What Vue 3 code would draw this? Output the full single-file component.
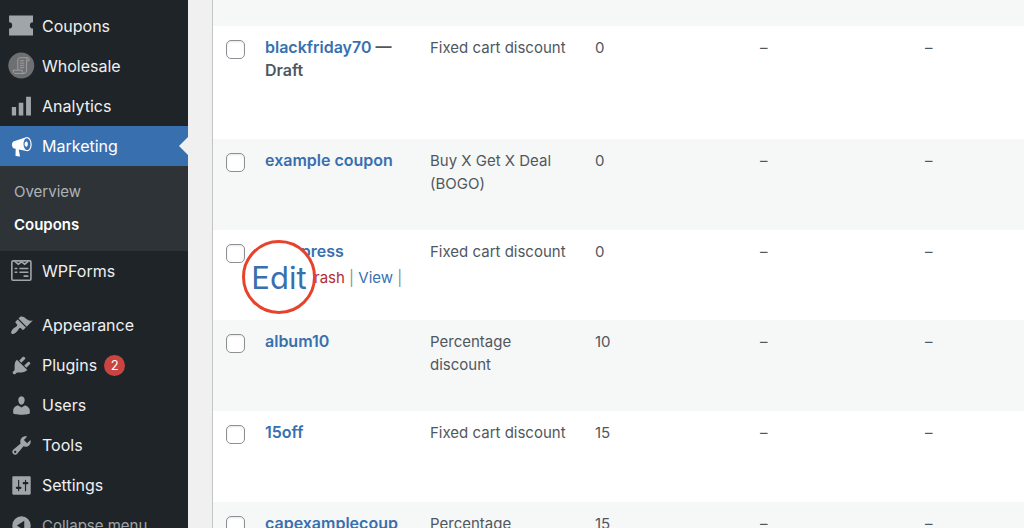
<script setup>
import { ref } from 'vue'

const topItems = [
  { label: 'Coupons', icon: 'ticket' },
  { label: 'Wholesale', icon: 'scroll' },
  { label: 'Analytics', icon: 'bars' },
  { label: 'Marketing', icon: 'megaphone', current: true },
]
const lowerItems = [
  { label: 'Appearance', icon: 'brush' },
  { label: 'Plugins', icon: 'plug', count: 2 },
  { label: 'Users', icon: 'user' },
  { label: 'Tools', icon: 'wrench' },
  { label: 'Settings', icon: 'sliders' },
]

const groups = [
  { items: topItems },
  { submenu: ['Overview', 'Coupons'] },
  { items: [{ label: 'WPForms', icon: 'form' }] },
  { separator: true },
  { items: lowerItems },
]

const icons = {
  ticket: 'M-.8 .4H20V6.4A2.7 2.7 0 0 0 20 11.8V17.8H-.8V11.8A2.7 2.7 0 0 0-.8 6.4Z',
  bars: 'M1.6 10.4H5.3V17.8H1.6ZM7.6 6.8H11.6V17.8H7.6ZM14 1.6H18.2V17.8H14Z',
  megaphone:
    'M18.15 5.94c.46 1.62.38 3.22-.02 4.48-.42 1.28-1.26 2.18-2.3 2.48-.16.06-.26.06-.4.06-.06.02-.12.02-.18.02-.06.02-.14.02-.22.02h-6.8l2.22 5.5c.02.14-.06.26-.14.34-.08.1-.24.16-.34.16H6.95c-.1 0-.26-.06-.34-.16-.08-.08-.16-.2-.14-.34l-1-5.5H4.25l-.02-.02c-.5.06-1.08-.18-1.54-.62s-.88-1.08-1.06-1.88c-.24-.8-.2-1.56-.02-2.2.18-.62.58-1.08 1.06-1.3l.02-.02 9-5.4c.1-.06.18-.1.24-.16.06-.04.14-.08.24-.12.16-.08.28-.12.5-.18 1.04-.3 2.24.1 3.22.98s1.84 2.24 2.26 3.86zm-2.58 5.98h-.02c.4-.1.74-.34 1.04-.7.58-.7.86-1.76.86-3.04 0-.64-.1-1.3-.28-1.98-.34-1.36-1.02-2.5-1.78-3.24s-1.68-1.1-2.46-.88c-.82.22-1.4.96-1.7 2-.32 1.04-.28 2.36.06 3.72.38 1.36 1 2.5 1.8 3.24.78.74 1.62 1.1 2.48.88zm-2.54-7.08c.22-.04.42-.02.62.04.38.16.76.48 1.02 1s.42 1.2.42 1.78c0 .3-.04.56-.12.8-.18.48-.44.84-.86.94-.34.1-.8-.06-1.14-.4s-.64-.86-.78-1.5c-.18-.62-.12-1.24.02-1.72s.48-.84.82-.94z',
  brush:
    'M14.48 11.06L7.41 3.99l1.5-1.5c.5-.56 2.3-.47 3.51.32 1.21.8 1.43 1.28 2.91 2.1 1.18.64 2.45 1.26 4.45.85zm-.71.71L6.7 4.7 4.93 6.47c-.39.39-.39 1.02 0 1.41l1.06 1.06c.39.39.39 1.03 0 1.42-.6.6-1.43 1.11-2.21 1.69-.35.26-.7.53-1.01.84C1.43 14.23.4 16.08 1.4 17.07c.99 1 2.84-.03 4.18-1.36.31-.31.58-.66.85-1.02.57-.78 1.08-1.61 1.69-2.21.39-.39 1.02-.39 1.41 0l1.06 1.06c.39.39 1.02.39 1.41 0z',
  plug: 'M13.11 4.36L9.87 7.6 8 5.73l3.24-3.24c.35-.34 1.05-.2 1.56.32.52.51.66 1.21.31 1.55zm-8 1.77l.91-1.12 9.01 9.01-1.19.84c-.71.71-2.63 1.16-3.82 1.16H6.14L4.9 17.26c-.59.59-1.54.59-2.12 0-.59-.58-.59-1.53 0-2.12l1.24-1.24v-3.88c0-1.13.4-3.19 1.09-3.89zm7.26 3.97l3.24-3.24c.34-.35 1.04-.21 1.55.31.52.51.66 1.21.31 1.55l-3.24 3.25z',
  user: 'M10 9.25c-2.27 0-2.73-3.44-2.73-3.44C7 4.02 7.82 2 9.97 2c2.16 0 2.98 2.02 2.71 3.81 0 0-.41 3.44-2.68 3.44zm0 2.57L12.72 10c2.39 0 4.52 2.33 4.52 4.53v2.49s-3.65 1.13-7.24 1.13c-3.65 0-7.24-1.13-7.24-1.13v-2.49c0-2.25 1.94-4.48 4.47-4.48z',
  wrench:
    'M16.68 9.77c-1.34 1.34-3.3 1.67-4.95.99l-5.41 6.52c-.99.99-2.59.99-3.58 0s-.99-2.59 0-3.57l6.52-5.42c-.68-1.65-.35-3.61.99-4.95 1.28-1.28 3.12-1.62 4.72-1.06l-2.89 2.89 2.82 2.82 2.86-2.87c.53 1.58.18 3.39-1.08 4.65zM3.81 16.21c.4.39 1.04.39 1.43 0 .4-.4.4-1.04 0-1.43-.39-.4-1.03-.4-1.43 0-.39.39-.39 1.03 0 1.43z',
  sliders:
    'M18 17V3c0-.6-.4-1-1-1H3c-.6 0-1 .4-1 1v14c0 .6.4 1 1 1h14c.6 0 1-.4 1-1zM8 11h1c.55 0 1 .45 1 1s-.45 1-1 1H8v1.5c0 .28-.22.5-.5.5s-.5-.22-.5-.5V13H6c-.55 0-1-.45-1-1s.45-1 1-1h1V5.5c0-.28.22-.5.5-.5s.5.22.5.5V11zm5-2h-1c-.55 0-1-.45-1-1s.45-1 1-1h1V5.5c0-.28.22-.5.5-.5s.5.22.5.5V7h1c.55 0 1 .45 1 1s-.45 1-1 1h-1v5.5c0 .28-.22.5-.5.5s-.5-.22-.5-.5V9z',
}

const coupons = ref([
  { code: 'blackfriday70', draft: true, type: 'Fixed cart discount', amount: 0 },
  { code: 'example coupon', type: 'Buy X Get X Deal (BOGO)', amount: 0 },
  { code: 'aliexpress', type: 'Fixed cart discount', amount: 0, active: true },
  { code: 'album10', type: 'Percentage discount', amount: 10 },
  { code: '15off', type: 'Fixed cart discount', amount: 15 },
  { code: 'capexamplecoup', type: 'Percentage discount', amount: 15 },
])
</script>

<template>
  <div class="admin">
    <nav class="sidebar" aria-label="Main menu">
      <template v-for="(group, g) in groups" :key="g">
        <div v-if="group.separator" class="separator"></div>
        <div v-else-if="group.submenu" class="submenu">
          <a v-for="s in group.submenu" :key="s" href="#" :class="{ selected: s === 'Coupons' }">{{ s }}</a>
        </div>
        <template v-else>
          <a v-for="item in group.items" :key="item.label" href="#" class="item" :class="{ current: item.current }">
            <svg v-if="item.icon === 'scroll'" class="icon" viewBox="0 0 20 20" aria-hidden="true">
              <circle cx="9.8" cy="9.2" r="11.3" fill="#6d6f71" />
              <g fill="none" stroke="#a2a4a6" stroke-width=".8">
                <path d="M6.8 13V4.2Q6.8 2.4 8.6 2.4H15.5Q17 2.8 16.6 5H14.4V13.6Q14.2 16 12 16H4Q2.4 15.5 2.8 13.2H10.6Q10.2 15.5 12 16M14.4 5V3.8Q14.5 2.6 15.5 2.4M8.6 5H12.4M8.6 7H12.4M8.6 9H12.4M8.6 11H12.4" />
              </g>
            </svg>
            <svg v-else-if="item.icon === 'form'" class="icon" viewBox="0 0 20 20" aria-hidden="true">
              <g fill="none" stroke="currentColor" stroke-width="1.4">
                <rect x="1.6" y=".8" width="16.6" height="16.8" rx="1" />
                <path d="M4.2 1.2 7.2 3.6 10 1.6 12.8 3.6 15.8 1.2M4 7.4H6.4M8.2 7.4H16M4 10.6H6.4M8.2 10.6H16M11.8 14H16" />
              </g>
            </svg>
            <svg v-else class="icon" viewBox="0 0 20 20" aria-hidden="true">
              <path :d="icons[item.icon]" fill="currentColor" fill-rule="evenodd" :transform="item.icon === 'megaphone' ? 'rotate(12 10 10)' : null" />
            </svg>
            <span>{{ item.label }}</span>
            <span v-if="item.count" class="count">{{ item.count }}</span>
          </a>
        </template>
      </template>
      <button type="button" class="item collapse">
        <svg class="icon" viewBox="0 0 20 20" aria-hidden="true">
          <path d="M10 2a8 8 0 1 0 0 16 8 8 0 0 0 0-16zM12.4 5.8V14.2L6 10Z" fill="currentColor" fill-rule="evenodd" />
        </svg>
        <span>Collapse menu</span>
      </button>
    </nav>

    <main class="content">
      <table>
        <colgroup>
          <col class="c-check" /><col class="c-data" /><col class="c-data" /><col class="c-data" /><col class="c-data" /><col />
        </colgroup>
        <tbody>
          <tr class="previous"><td colspan="6"></td></tr>
          <tr v-for="c in coupons" :key="c.code" :class="{ tall: c.draft, active: c.active }">
            <td class="check"><input type="checkbox" :aria-label="'Select ' + c.code" /></td>
            <td class="name">
              <strong><a href="#">{{ c.code }}</a><template v-if="c.draft"> — Draft</template></strong>
              <div v-if="c.active" class="actions">
                <a href="#">Edit</a> | <a href="#" class="trash">Trash</a> | <a href="#">View</a> |
              </div>
              <a v-if="c.active" href="#" class="lens">Edit</a>
            </td>
            <td>{{ c.type }}</td>
            <td>{{ c.amount }}</td>
            <td>–</td>
            <td>–</td>
          </tr>
        </tbody>
      </table>
    </main>
  </div>
</template>

<style>
body {
  margin: 0;
  background: #f0f0f1;
}
</style>

<style scoped>
.admin {
  display: flex;
  height: 100vh;
  overflow: hidden;
  font-family: Inter, "Liberation Sans", sans-serif;
  font-size: 15px;
  color: #50575e;
}
a {
  color: #3870af;
  text-decoration: none;
}
.sidebar {
  flex: 0 0 188px;
  padding-top: 6px;
  background: #1f2428;
  font-size: 16px;
}
.item {
  position: relative;
  display: flex;
  align-items: center;
  gap: 9px;
  box-sizing: border-box;
  width: 100%;
  height: 40px;
  padding: 0 10px;
  color: #f0f0f1;
}
.icon {
  flex: none;
  width: 23px;
  height: 23px;
  overflow: visible;
  color: #a0a5aa;
}
.current {
  background: #3870af;
  color: #fff;
}
.current .icon {
  color: #fff;
}
.current::after {
  content: "";
  position: absolute;
  right: 0;
  top: 11px;
  border: 9px solid transparent;
  border-left: 0;
  border-right-color: #f0f0f1;
}
.submenu {
  display: flex;
  flex-direction: column;
  box-sizing: border-box;
  padding: 9px 14px 10px;
  background: #2e3338;
  font-size: 15px;
  line-height: 33px;
}
.submenu a {
  color: #aeb3b8;
}
.submenu .selected {
  color: #fff;
  font-weight: 600;
}
.separator {
  height: 14px;
}
.count {
  width: 21px;
  margin-left: -2px;
  border-radius: 11px;
  background: #ca4541;
  color: #fff;
  font-size: 13px;
  line-height: 21px;
  text-align: center;
}
.collapse {
  border: 0;
  background: none;
  color: #a0a5aa;
  font: inherit;
  font-size: 15px;
  text-align: left;
}
.content {
  flex: 1;
  min-width: 0;
  padding-left: 24px;
}
table {
  width: 100%;
  table-layout: fixed;
  border-collapse: separate;
  border-spacing: 0;
  border-left: 1px solid #c3c4c7;
  background: #fff;
}
.c-check {
  width: 40px;
}
.c-data {
  width: 165px;
}
tr {
  height: 91px;
}
tr.tall {
  height: 113px;
}
tr.active {
  height: 90px;
}
tr.previous {
  height: 26px;
}
tr:nth-child(odd) {
  background: #f6f7f7;
}
td {
  box-sizing: border-box;
  padding: 10px 12px 0;
  line-height: 23px;
  vertical-align: top;
}
.previous td {
  padding: 0;
}
.check {
  padding: 14px 0 0 13px;
  line-height: 0;
}
.check input {
  appearance: none;
  box-sizing: border-box;
  width: 19px;
  height: 19px;
  margin: 0;
  border: 1px solid #8c8f94;
  border-radius: 5px;
  background: #fff;
  box-shadow: inset 0 1px 2px rgba(0, 0, 0, 0.1);
}
.name {
  position: relative;
}
.name strong {
  font-size: 16px;
  font-weight: 600;
}
.actions {
  padding-top: 3px;
  color: #8c8f94;
  font-size: 15px;
  white-space: nowrap;
}
.actions .trash {
  color: #b32d2e;
}
.lens {
  position: absolute;
  left: -11px;
  top: 10px;
  box-sizing: border-box;
  width: 74px;
  height: 74px;
  border: 3px solid #e7432c;
  border-radius: 50%;
  background: #fff;
  font-size: 31px;
  line-height: 69px;
  text-align: center;
}
</style>
